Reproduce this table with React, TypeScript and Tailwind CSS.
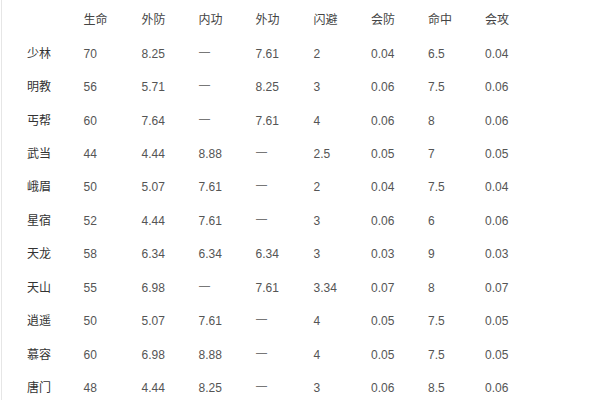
const headers = ['', '生命', '外防', '内功', '外功', '闪避', '会防', '命中', '会攻'];

const rows: string[][] = [
  ['少林', '70', '8.25', '一', '7.61', '2', '0.04', '6.5', '0.04'],
  ['明教', '56', '5.71', '一', '8.25', '3', '0.06', '7.5', '0.06'],
  ['丐帮', '60', '7.64', '一', '7.61', '4', '0.06', '8', '0.06'],
  ['武当', '44', '4.44', '8.88', '一', '2.5', '0.05', '7', '0.05'],
  ['峨眉', '50', '5.07', '7.61', '一', '2', '0.04', '7.5', '0.04'],
  ['星宿', '52', '4.44', '7.61', '一', '3', '0.06', '6', '0.06'],
  ['天龙', '58', '6.34', '6.34', '6.34', '3', '0.03', '9', '0.03'],
  ['天山', '55', '6.98', '一', '7.61', '3.34', '0.07', '8', '0.07'],
  ['逍遥', '50', '5.07', '7.61', '一', '4', '0.05', '7.5', '0.05'],
  ['慕容', '60', '6.98', '8.88', '一', '4', '0.05', '7.5', '0.05'],
  ['唐门', '48', '4.44', '8.25', '一', '3', '0.06', '8.5', '0.06'],
];

const cols = 'grid grid-cols-[56.5px_58px_57px_57px_58px_57.5px_57px_57px_57px] items-center h-[33.45px]';

export default function App() {
  return (
    <div
      className="w-[593px] h-[400px] bg-white overflow-hidden"
      style={{ fontFamily: '"Liberation Sans", Arial, "Noto Sans CJK SC", sans-serif' }}
    >
      <div className="ml-[1px] h-full border-l border-[#e6e6e6] pl-[25px] pt-[3.5px]">
        <div className={cols}>
          {headers.map((h, i) => (
            <span key={i} className="text-[12px] text-[#444]">
              {h}
            </span>
          ))}
        </div>
        {rows.map((r) => (
          <div key={r[0]} className={cols}>
            {r.map((c, i) => (
              <span
                key={i}
                className={
                  i === 0
                    ? 'text-[12px] text-[#333]'
                    : c === '一'
                      ? 'text-[12px] text-[#777]'
                      : 'text-[12px] text-[#555]'
                }
              >
                {c}
              </span>
            ))}
          </div>
        ))}
      </div>
    </div>
  );
}
